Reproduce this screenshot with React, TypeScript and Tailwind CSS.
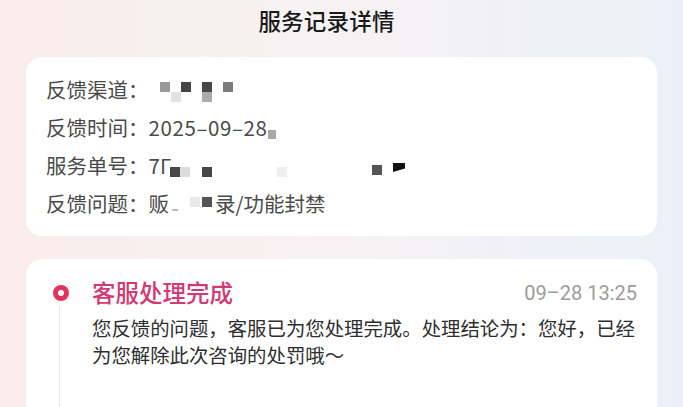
import React from "react";

const font = { fontFamily: '"Noto Sans CJK SC", "Noto Sans", sans-serif' };

export default function App() {
  return (
    <div
      className="w-[683px] h-[407px] overflow-hidden bg-gradient-to-r from-[#f9eced] via-[#f6f2f3] to-[#ebf0f8] flex flex-col"
      style={font}
    >
      <div className="h-[57px] flex items-start justify-center pt-[4px] pr-[30px]">
        <h1 className="text-[22.5px] leading-[32px] font-medium text-[#1a1a1a] tracking-[0.2px]">服务记录详情</h1>
      </div>

      <div className="mx-[26px] bg-white rounded-[16px] pl-[20px] pr-5 pt-[13px] pb-[14px] text-[20.5px] leading-[38px] text-[#4a4a4a]">
        <div className="relative flex items-center">
          <span>反馈渠道：</span>
          <span className="absolute left-[114px] top-[12px] w-[10px] h-[10px] bg-[#9a9a9a]" />
          <span className="absolute left-[135px] top-[12px] w-[10px] h-[10px] bg-[#454545]" />
          <span className="absolute left-[156px] top-[12px] w-[10px] h-[10px] bg-[#474747]" />
          <span className="absolute left-[177px] top-[12px] w-[10px] h-[10px] bg-[#7c7c7c]" />
          <span className="absolute left-[125px] top-[22px] w-[10px] h-[10px] bg-[#e2e2e2]" />
          <span className="absolute left-[156px] top-[22px] w-[10px] h-[10px] bg-[#ababab]" />
        </div>
        <div className="relative flex items-center">
          <span>反馈时间：</span>
          <span className="tracking-[0.6px]">2025–09–28</span>
          <span className="absolute left-[222px] top-[22px] w-[8px] h-[9px] bg-[#a8a8a8]" />
        </div>
        <div className="relative flex items-center">
          <span>服务单号：</span>
          <span>7Γ</span>
          <span className="absolute left-[124px] top-[21px] w-[10px] h-[10px] bg-[#474747]" />
          <span className="absolute left-[134px] top-[21px] w-[10px] h-[10px] bg-[#dcdcdc]" />
          <span className="absolute left-[156px] top-[21px] w-[10px] h-[10px] bg-[#474747]" />
          <span className="absolute left-[231px] top-[21px] w-[10px] h-[10px] bg-[#efefef]" />
          <span className="absolute left-[326px] top-[19px] w-[10px] h-[10px] bg-[#555555]" />
          <span className="absolute left-[347px] top-[17px] w-[12px] h-[9px] bg-[#111] [clip-path:polygon(0_0,100%_0,100%_60%,0_100%)]" />
        </div>
        <div className="relative flex items-center">
          <span>反馈问题：</span>
          <span>贩</span>
          <span className="w-[46px]" />
          <span>录/功能封禁</span>
          <span className="absolute left-[126px] top-[25px] w-[6px] h-[2px] bg-[#bbb]" />
          <span className="absolute left-[144px] top-[13px] w-[10px] h-[10px] bg-[#eaeaea]" />
          <span className="absolute left-[156px] top-[13px] w-[10px] h-[10px] bg-[#555]" />
        </div>
      </div>

      <div className="mx-[26px] mt-[23px] flex-1 bg-white rounded-t-[16px] flex pl-[27px] pr-5 pt-[17px]">
        <div className="flex flex-col items-center w-[16px]">
          <div className="mt-[9px] w-[16px] h-[16px] rounded-full bg-[#e3335c] flex items-center justify-center">
            <div className="w-[6px] h-[6px] rounded-full bg-white" />
          </div>
          <div className="mt-[4px] w-px flex-1 bg-[#e6e6e6] -ml-[3px]" />
        </div>
        <div className="flex-1 ml-[23px]">
          <div className="flex items-center justify-between h-[34px]">
            <span className="text-[23.5px] font-medium text-[#d23a76]">客服处理完成</span>
            <span className="text-[20px] text-[#9c9c9c]" style={{ fontFamily: 'Roboto, "Noto Sans", sans-serif' }}>09–28 13:25</span>
          </div>
          <p className="mt-[4px] text-[19.4px] leading-[27px] text-[#2e2e2e]">
            您反馈的问题，客服已为您处理完成。处理结论为：您好，已经为您解除此次咨询的处罚哦～
          </p>
        </div>
      </div>
    </div>
  );
}
